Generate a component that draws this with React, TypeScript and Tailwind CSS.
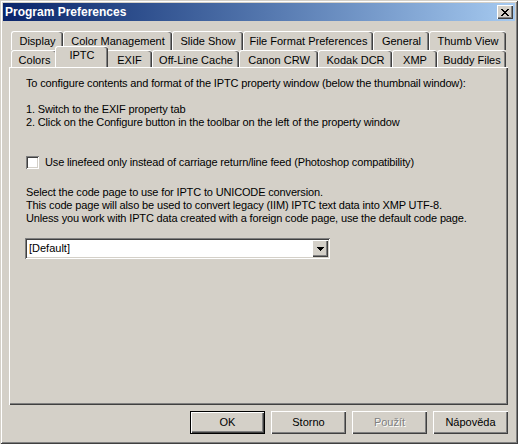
import React from "react";

const font = { fontFamily: '"Liberation Sans", Arial, sans-serif' };

type Tab = { label: string; w: number };

const backRow: Tab[] = [
  { label: "Display", w: 52 },
  { label: "Color Management", w: 109 },
  { label: "Slide Show", w: 71 },
  { label: "File Format Preferences", w: 130 },
  { label: "General", w: 56 },
  { label: "Thumb View", w: 77 },
];

const frontRow: Tab[] = [
  { label: "Colors", w: 46 },
  { label: "IPTC", w: 49 },
  { label: "EXIF", w: 46 },
  { label: "Off-Line Cache", w: 87 },
  { label: "Canon CRW", w: 79 },
  { label: "Kodak DCR", w: 74 },
  { label: "XMP", w: 45 },
  { label: "Buddy Files", w: 69 },
];

const raised =
  "shadow-[inset_1px_1px_0_#ffffff,inset_-1px_-1px_0_#404040,inset_-2px_-2px_0_#808080]";
const sunken =
  "shadow-[inset_1px_1px_0_#808080,inset_-1px_-1px_0_#ffffff,inset_2px_2px_0_#404040,inset_-2px_-2px_0_#d4d0c8]";

function TabButton({ tab, h, selected }: { tab: Tab; h: number; selected?: boolean }) {
  if (selected) {
    return (
      <div
        className="relative z-10 -mt-[3px] -mx-[2px] h-[21px] flex items-start justify-center pt-[2px] bg-[#d4d0c8] border-l border-t border-white rounded-tl-[3px] rounded-tr-[3px] shadow-[inset_-1px_0_0_#404040,inset_-2px_0_0_#808080]"
        style={{ width: tab.w + 4 }}
      >
        <span className="text-[11px] leading-[13px] whitespace-nowrap">{tab.label}</span>
      </div>
    );
  }
  return (
    <div
      className="flex items-start justify-center pt-[3px] bg-[#d4d0c8] border-l border-t border-white rounded-tl-[3px] rounded-tr-[3px] shadow-[inset_-1px_0_0_#404040,inset_-2px_0_0_#808080]"
      style={{ width: tab.w, height: h }}
    >
      <span className="text-[11px] leading-[13px] whitespace-nowrap">{tab.label}</span>
    </div>
  );
}

function Btn({ label, isDefault, disabled }: { label: string; isDefault?: boolean; disabled?: boolean }) {
  return (
    <div
      className={
        "w-[75px] h-[23px] flex items-center justify-center text-[11px] " +
        (isDefault
          ? "border border-black shadow-[inset_1px_1px_0_#ffffff,inset_-1px_-1px_0_#404040,inset_-2px_-2px_0_#808080]"
          : raised)
      }
    >
      <span
        className={disabled ? "text-[#808080] [text-shadow:1px_1px_0_#ffffff]" : "text-black"}
      >
        {label}
      </span>
    </div>
  );
}

export default function App() {
  return (
    <div
      className="w-[518px] h-[444px] bg-[#d4d0c8] text-black flex flex-col shadow-[inset_1px_1px_0_#d4d0c8,inset_-1px_-1px_0_#404040,inset_2px_2px_0_#ffffff,inset_-2px_-2px_0_#808080]"
      style={font}
    >
      {/* title bar */}
      <div className="mx-[3px] mt-[3px] h-[18px] bg-linear-to-r from-[#0a246a] to-[#a6caf0] flex items-center justify-between pl-[2px] pr-[2px]">
        <span className="text-white font-bold text-[12px] leading-[14px]">Program Preferences</span>
        <div className={"w-[16px] h-[14px] bg-[#d4d0c8] flex items-center justify-center " + raised}>
          <svg width="8" height="7" viewBox="0 0 8 7" shapeRendering="crispEdges">
            <path
              fill="#000"
              d="M0 0h2v1h-2zM6 0h2v1h-2zM1 1h2v1h-2zM5 1h2v1h-2zM2 2h4v1h-4zM3 3h2v1h-2zM2 4h4v1h-4zM1 5h2v1h-2zM5 5h2v1h-2zM0 6h2v1h-2zM6 6h2v1h-2z"
            />
          </svg>
        </div>
      </div>

      {/* tabs */}
      <div className="mt-[10px] pl-[11px] flex">
        {backRow.map((t) => (
          <TabButton key={t.label} tab={t} h={19} />
        ))}
      </div>
      <div className="pl-[11px] flex h-[17px] items-end">
        {frontRow.map((t) => (
          <TabButton key={t.label} tab={t} h={17} selected={t.label === "IPTC"} />
        ))}
      </div>

      {/* panel */}
      <div className="ml-[9px] w-[499px] h-[338px] border-l border-t border-white shadow-[inset_-1px_-1px_0_#404040,inset_-2px_-2px_0_#808080] pl-[16px] pt-[9px] text-[11px] leading-[13px] tracking-[-0.15px] whitespace-nowrap">
        <div>To configure contents and format of the IPTC property window (below the thumbnail window):</div>
        <div className="mt-[13px]">1. Switch to the EXIF property tab</div>
        <div>2. Click on the Configure button in the toolbar on the left of the property window</div>

        <div className="mt-[27px] flex items-center gap-[6px]">
          <div className={"w-[13px] h-[13px] bg-white " + sunken} />
          <span>Use linefeed only instead of carriage return/line feed (Photoshop compatibility)</span>
        </div>

        <div className="mt-[17px]">Select the code page to use for IPTC to UNICODE conversion.</div>
        <div>This code page will also be used to convert legacy (IIM) IPTC text data into XMP UTF-8.</div>
        <div>Unless you work with IPTC data created with a foreign code page, use the default code page.</div>

        <div className={"mt-[13px] -ml-[1px] w-[305px] h-[21px] bg-white flex items-center justify-between p-[2px] tracking-normal " + sunken}>
          <span className="pl-[2px]">[Default]</span>
          <div className={"w-[16px] h-[17px] bg-[#d4d0c8] flex items-center justify-center " + raised}>
            <svg width="7" height="4" viewBox="0 0 7 4" shapeRendering="crispEdges">
              <path fill="#000" d="M0 0h7v1h-7zM1 1h5v1h-5zM2 2h3v1h-3zM3 3h1v1h-1z" />
            </svg>
          </div>
        </div>
      </div>

      {/* buttons */}
      <div className="mt-[6px] pr-[10px] flex justify-end gap-[6px]">
        <Btn label="OK" isDefault />
        <Btn label="Storno" />
        <Btn label="Použít" disabled />
        <Btn label="Nápověda" />
      </div>
    </div>
  );
}
